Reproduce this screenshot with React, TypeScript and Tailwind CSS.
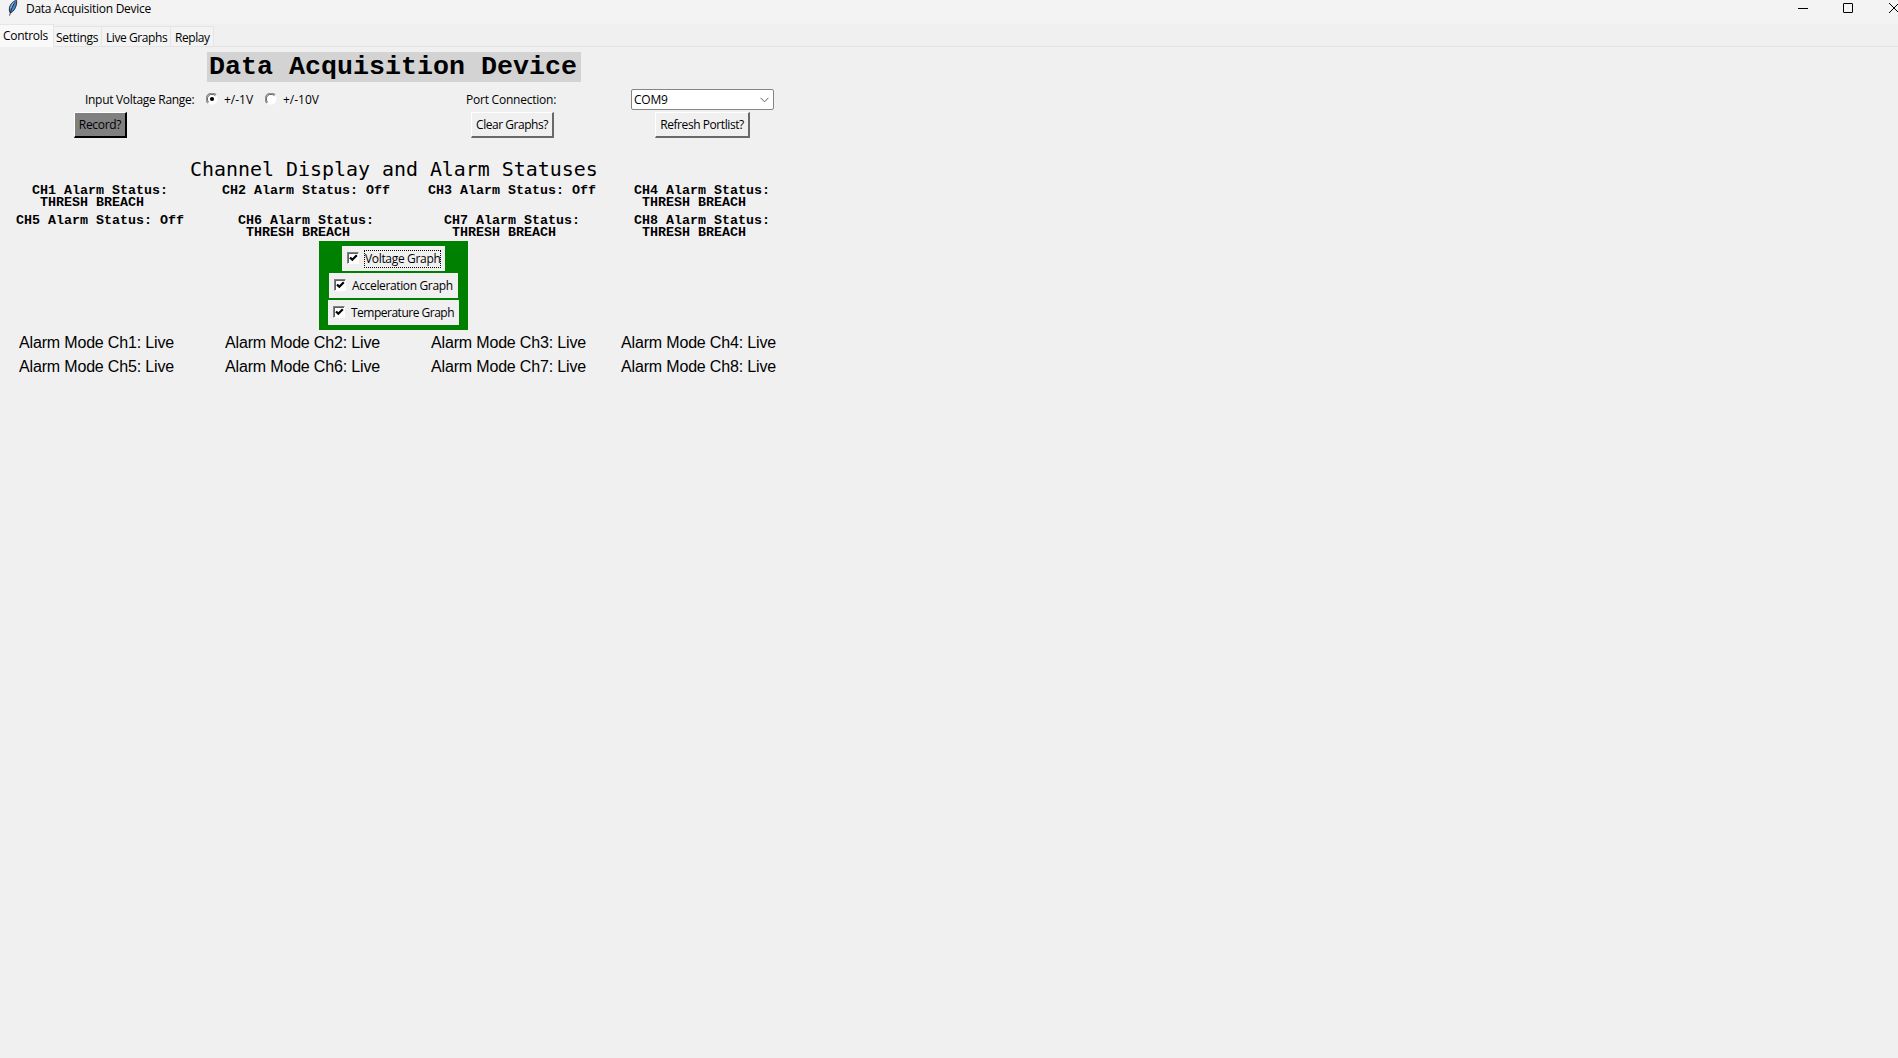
import React, { useState } from 'react';

const UI = "font-['Open_Sans','Noto_Sans',sans-serif] text-[12px] text-black";

function Feather() {
  return (
    <svg width="10" height="16" viewBox="0 0 10 16" className="shrink-0">
      <path d="M8.6 0.4C6 .6 2.6 3.4 1.6 7.2 1.1 9.4 1.3 11 1.9 12.4L3 12.6C5.4 11.6 7.4 8.6 8.2 5.4 8.7 3.4 8.9 1.6 8.6 .4Z" fill="#4a86cc" stroke="#16202c" strokeWidth="0.9" />
      <path d="M7 2C4.6 6 3 9.6 1.6 15.6" stroke="#10151c" strokeWidth="0.8" fill="none" />
      <path d="M6.2 2.2C4.4 4 3.2 6 2.8 8.4" stroke="#9cc4f0" strokeWidth="1" fill="none" />
    </svg>
  );
}

function Radio({ checked }: { checked: boolean }) {
  return (
    <svg width="12" height="12" viewBox="0 0 12 12" className="relative -top-px shrink-0">
      <circle cx="6" cy="6" r="5.5" fill="#fff" />
      <path d="M1.9 10.1A5.6 5.6 0 0 1 10.1 1.9" fill="none" stroke="#8a8a8a" strokeWidth="1.2" />
      <path d="M2.7 9.3A4.6 4.6 0 0 1 9.3 2.7" fill="none" stroke="#5f5f5f" strokeWidth="1" />
      {checked && <circle cx="6" cy="6" r="2.1" fill="#000" />}
    </svg>
  );
}

function Check() {
  return (
    <span className="relative -top-px flex h-[12px] w-[12px] shrink-0 border border-t-[#808080] border-l-[#808080] border-r-white border-b-white bg-white">
      <span className="flex h-[10px] w-[10px] border-t border-l border-[#606060]">
        <svg width="9" height="9" viewBox="0 0 9 9">
          <path d="M1 3.5L3.3 5.8L7.8 1.3" fill="none" stroke="#000" strokeWidth="2.2" />
        </svg>
      </span>
    </span>
  );
}

function TkButton({ label, className }: { label: string; className: string }) {
  return (
    <button
      className={`${UI} flex h-[26px] items-center justify-center whitespace-nowrap border-t border-l border-r-2 border-b-2 border-t-white border-l-white border-r-[#696969] border-b-[#696969] bg-[#f0f0f0] ${className}`}
    >
      {label}
    </button>
  );
}

const channels = [
  { id: 1, breach: true },
  { id: 2, breach: false },
  { id: 3, breach: false },
  { id: 4, breach: true },
  { id: 5, breach: false },
  { id: 6, breach: true },
  { id: 7, breach: true },
  { id: 8, breach: true },
];

const COLS = 'grid grid-cols-[200px_212px_200px_180px]';

export default function App() {
  const [range, setRange] = useState('1');
  return (
    <div className={`${UI} h-[1058px] w-[1898px] overflow-hidden bg-[#f0f0f0]`}>
      <header className="flex h-6 justify-between bg-[#f3f3f3]">
        <div className="flex pl-2">
          <Feather />
          <span className="ml-2 h-[18px] leading-[18px] tracking-[-0.27px]">Data Acquisition Device</span>
        </div>
        <svg width="100" height="16" viewBox="0 0 100 16" fill="none" stroke="#000">
          <path d="M0 8.5H10" />
          <rect x="45.5" y="3.5" width="9" height="9" rx="0.5" />
          <path d="M91 3L101 13M101 3L91 13" />
        </svg>
      </header>

      <nav className="flex h-[23px] items-end border-b border-[#e4e4e4]">
        <div className="-mb-px flex h-[23px] w-[54px] border-t border-r border-[#e5e5e5] bg-[#f9f9f9] pl-[3px] leading-[22px] tracking-[-0.3px]">Controls</div>
        <div className="h-5 w-[48px] border-t border-r border-[#e5e5e5] bg-[#f3f3f3] pl-[2px] leading-[22px] tracking-[-0.3px]">Settings</div>
        <div className="h-5 w-[69px] border-t border-r border-[#e5e5e5] bg-[#f3f3f3] pl-1 leading-[22px] tracking-[-0.42px]">Live Graphs</div>
        <div className="h-5 w-[43px] border-t border-r border-[#e5e5e5] bg-[#f3f3f3] pl-1 leading-[22px] tracking-[-0.45px]">Replay</div>
      </nav>

      <main className="w-[792px] pt-[5px]">
        <h1 className="ml-[207px] h-[30px] w-[374px] bg-[#d3d3d3] pl-[2px] font-['Liberation_Mono',monospace] text-[26.66px] leading-[31px] font-bold whitespace-pre">
          Data Acquisition Device
        </h1>

        <div className="mt-[7px] flex h-[21px] items-center">
          <span className="ml-[85px] w-[121px] whitespace-nowrap tracking-[-0.3px]">Input Voltage Range:</span>
          <button className="flex w-[59px] items-center gap-[6px]" onClick={() => setRange('1')}>
            <Radio checked={range === '1'} />
            <span>+/-1V</span>
          </button>
          <button className="flex w-[201px] items-center gap-[6px]" onClick={() => setRange('10')}>
            <Radio checked={range === '10'} />
            <span>+/-10V</span>
          </button>
          <span className="w-[165px] whitespace-nowrap tracking-[-0.23px]">Port Connection:</span>
          <div className="flex h-[21px] w-[143px] items-center justify-between rounded-[2px] border border-[#858585] bg-white pr-1 pl-[2px]">
            <span className="tracking-[-0.2px]">COM9</span>
            <svg width="9" height="6" viewBox="0 0 9 6" fill="none" stroke="#606060"><path d="M.5 .8L4.5 4.8L8.5 .8" /></svg>
          </div>
        </div>

        <div className="mt-[2px] flex">
          <TkButton label="Record?" className="ml-[74px] w-[53px] bg-[#808080]! border-r-black! border-b-black! tracking-[-0.3px]" />
          <TkButton label="Clear Graphs?" className="ml-[344px] w-[83px] tracking-[-0.46px]" />
          <TkButton label="Refresh Portlist?" className="ml-[101px] w-[95px] tracking-[-0.43px]" />
        </div>

        <h2 className="mt-[20px] ml-[190px] h-[23px] font-['DejaVu_Sans_Mono',monospace] text-[19.93px] leading-[24px] whitespace-pre">
          Channel Display and Alarm Statuses
        </h2>

        <div className={`${COLS} auto-rows-[30px] justify-items-center font-['Liberation_Mono',monospace] text-[13.33px] leading-[12px] font-bold`}>
          {channels.map((c) => (
            <div key={c.id} className="whitespace-pre pt-[4px]">
              <div>{`CH${c.id} Alarm Status:${c.breach ? '' : ' Off'}`}</div>
              {c.breach && <div className="pl-2">THRESH BREACH</div>}
            </div>
          ))}
        </div>

        <div className="ml-[319px] flex h-[89px] w-[149px] flex-col items-center gap-[2px] bg-[#008000] py-[5px]">
          <label className="flex h-[25px] w-[103px] items-center bg-[#f0f0f0] pl-[5px]">
            <Check />
            <span className="ml-[5px] flex h-[18px] w-[77px] items-center border border-dotted border-black whitespace-nowrap tracking-[-0.33px]">Voltage Graph</span>
          </label>
          <label className="flex h-[25px] w-[129px] items-center bg-[#f0f0f0] pl-[5px]">
            <Check />
            <span className="ml-[6px] whitespace-nowrap tracking-[-0.36px]">Acceleration Graph</span>
          </label>
          <label className="flex h-[25px] w-[131px] items-center bg-[#f0f0f0] pl-[5px]">
            <Check />
            <span className="ml-[6px] whitespace-nowrap tracking-[-0.5px]">Temperature Graph</span>
          </label>
        </div>

        <div className={`${COLS} auto-rows-[24px] justify-items-center pt-px font-['Liberation_Sans',sans-serif] text-[16px] leading-[24px] tracking-[-0.17px]`}>
          {channels.map((c) => (
            <div key={c.id} className="pr-[7px] whitespace-nowrap">{`Alarm Mode Ch${c.id}: Live`}</div>
          ))}
        </div>
      </main>
    </div>
  );
}
